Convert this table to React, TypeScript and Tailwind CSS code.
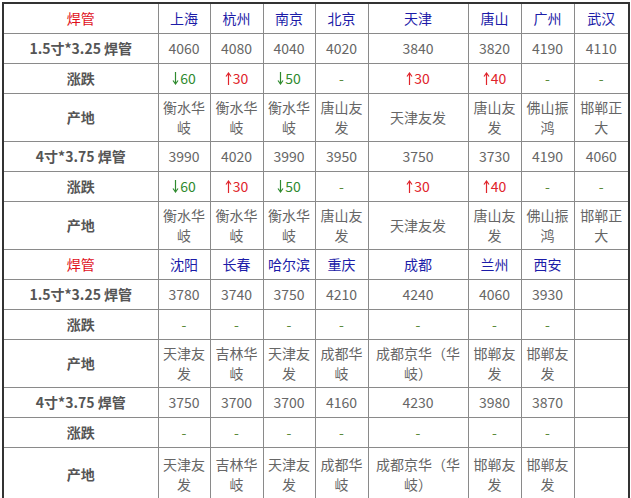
import React from 'react';

type Change = { dir: 'up' | 'down' | 'none' | 'empty'; value?: number };

interface Spec {
  spec: string;
  prices: (number | null)[];
  changes: Change[];
  origins: string[];
}

const up = (value: number): Change => ({ dir: 'up', value });
const down = (value: number): Change => ({ dir: 'down', value });
const none: Change = { dir: 'none' };
const empty: Change = { dir: 'empty' };

const blocks: { cities: string[]; specs: Spec[] }[] = [
  {
    cities: ['上海', '杭州', '南京', '北京', '天津', '唐山', '广州', '武汉'],
    specs: [
      {
        spec: '1.5寸*3.25 焊管',
        prices: [4060, 4080, 4040, 4020, 3840, 3820, 4190, 4110],
        changes: [down(60), up(30), down(50), none, up(30), up(40), none, none],
        origins: ['衡水华岐', '衡水华岐', '衡水华岐', '唐山友发', '天津友发', '唐山友发', '佛山振鸿', '邯郸正大'],
      },
      {
        spec: '4寸*3.75 焊管',
        prices: [3990, 4020, 3990, 3950, 3750, 3730, 4190, 4060],
        changes: [down(60), up(30), down(50), none, up(30), up(40), none, none],
        origins: ['衡水华岐', '衡水华岐', '衡水华岐', '唐山友发', '天津友发', '唐山友发', '佛山振鸿', '邯郸正大'],
      },
    ],
  },
  {
    cities: ['沈阳', '长春', '哈尔滨', '重庆', '成都', '兰州', '西安', ''],
    specs: [
      {
        spec: '1.5寸*3.25 焊管',
        prices: [3780, 3740, 3750, 4210, 4240, 4060, 3930, null],
        changes: [none, none, none, none, none, none, none, empty],
        origins: ['天津友发', '吉林华岐', '天津友发', '成都华岐', '成都京华（华岐）', '邯郸友发', '邯郸友发', ''],
      },
      {
        spec: '4寸*3.75 焊管',
        prices: [3750, 3700, 3700, 4160, 4230, 3980, 3870, null],
        changes: [none, none, none, none, none, none, none, empty],
        origins: ['天津友发', '吉林华岐', '天津友发', '成都华岐', '成都京华（华岐）', '邯郸友发', '邯郸友发', ''],
      },
    ],
  },
];

const colWidths = [155, 52, 53, 52, 53, 100, 53, 53, 55];

const cellBase = 'border border-[#8a8a8a] text-center align-middle px-[2px]';

function Arrow({ dir }: { dir: 'up' | 'down' }) {
  return (
    <svg
      width="7"
      height="13"
      viewBox="0 0 7 13"
      className="inline-block align-[-1px] mr-[1px]"
      fill="none"
      stroke="currentColor"
      strokeWidth="1.2"
    >
      {dir === 'up' ? (
        <>
          <path d="M3.5 1.5V13" />
          <path d="M1 4.5L3.5 1L6 4.5" />
        </>
      ) : (
        <>
          <path d="M3.5 0V11.5" />
          <path d="M1 8.5L3.5 12L6 8.5" />
        </>
      )}
    </svg>
  );
}

function ChangeCell({ c }: { c: Change }) {
  if (c.dir === 'empty') return <td className={cellBase}></td>;
  if (c.dir === 'none') return <td className={`${cellBase} text-[#5b8a3a]`}>-</td>;
  const color = c.dir === 'up' ? 'text-[#e0242b]' : 'text-[#2f8a2f]';
  return (
    <td className={`${cellBase} ${color}`}>
      <Arrow dir={c.dir} />
      {c.value}
    </td>
  );
}

export default function App() {
  const isLast = (bi: number, si: number) => bi === blocks.length - 1 && si === 1;
  return (
    <div
      className="bg-white w-[631px] h-[498px] overflow-hidden pl-[2px] pt-[2px]"
      style={{ fontFamily: '"Noto Sans CJK SC", "Noto Sans", sans-serif' }}
    >
      <table className="border-collapse table-fixed border-2 border-[#333] text-[14px] leading-[20px] text-[#666]">
        <colgroup>
          {colWidths.map((w, i) => (
            <col key={i} style={{ width: w }} />
          ))}
        </colgroup>
        <tbody>
          {blocks.map((block, bi) => (
            <React.Fragment key={bi}>
              <tr className="h-[30px]">
                <td className={`${cellBase} text-[#e0101a]`}>焊管</td>
                {block.cities.map((city, i) => (
                  <td key={i} className={`${cellBase} text-[#1c1ca8]`}>
                    {city}
                  </td>
                ))}
              </tr>
              {block.specs.map((s, si) => (
                <React.Fragment key={si}>
                  <tr className="h-[30px]">
                    <td className={`${cellBase} font-bold text-[#555]`}>{s.spec}</td>
                    {s.prices.map((p, i) => (
                      <td key={i} className={cellBase}>
                        {p ?? ''}
                      </td>
                    ))}
                  </tr>
                  <tr className="h-[30px]">
                    <td className={`${cellBase} font-bold text-[#555]`}>涨跌</td>
                    {s.changes.map((c, i) => (
                      <ChangeCell key={i} c={c} />
                    ))}
                  </tr>
                  <tr className={isLast(bi, si) ? 'h-[54px]' : 'h-[48px]'}>
                    <td className={`${cellBase} font-bold text-[#555]`}>产地</td>
                    {s.origins.map((o, i) => (
                      <td key={i} className={cellBase}>
                        {o}
                      </td>
                    ))}
                  </tr>
                </React.Fragment>
              ))}
            </React.Fragment>
          ))}
        </tbody>
      </table>
    </div>
  );
}
